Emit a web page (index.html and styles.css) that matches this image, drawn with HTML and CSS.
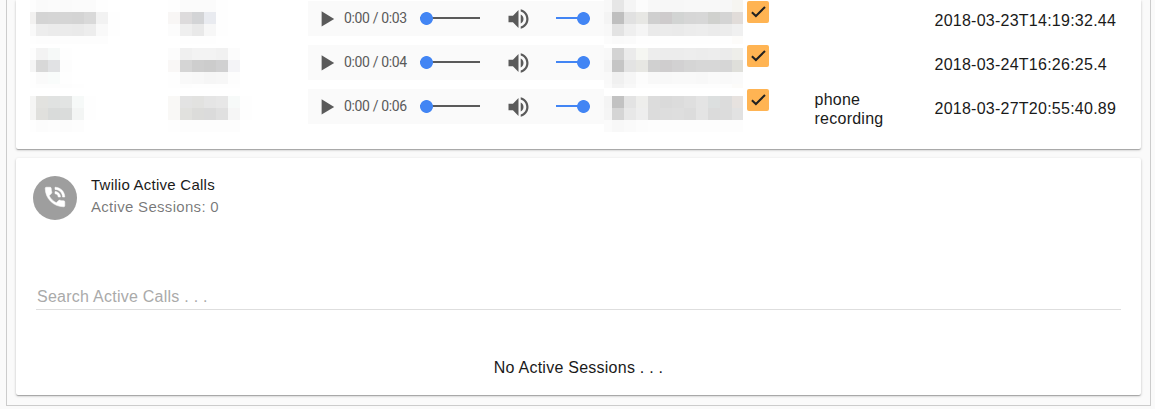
FILE: index.html
```html
<!DOCTYPE html>
<html lang="en">
<head>
<meta charset="utf-8">
<title>Twilio Calls</title>
<link rel="stylesheet" href="styles.css">
</head>
<body>
<svg class="defs" aria-hidden="true">
  <symbol id="play" viewBox="0 0 14 16"><path d="M.6.3v15.2L13.2 7.9z"/></symbol>
  <symbol id="volume" viewBox="3 3 18 18"><path d="M3 9v6h4l5 5V4L7 9H3zm13.500 3c0-1.770-1.020-3.290-2.500-4.030v8.050c1.480-.730 2.500-2.250 2.500-4.020zM14 3.230v2.060c2.890.860 5 3.540 5 6.710s-2.110 5.850-5 6.710v2.060c4.010-.910 7-4.490 7-8.770s-2.990-7.860-7-8.770z"/></symbol>
  <symbol id="check" viewBox="0 0 22 22"><path d="M4.900 11.200 8.900 15 18 6" fill="none" stroke="#212121" stroke-width="2"/></symbol>
</svg>
<main class="panel">
  <section class="card recordings">
    <div class="row">
      <svg class="masked name"></svg><svg class="masked number"></svg>
      <div class="player"><svg class="play"><use href="#play"/></svg><span class="time">0:00 / 0:03</span><i class="track"></i><svg class="volume"><use href="#volume"/></svg><i class="level"></i></div>
      <svg class="masked sid"></svg>
      <span class="box"><svg><use href="#check"/></svg></span>
      <span class="note"></span><span class="date">2018-03-23T14:19:32.44</span>
    </div>
    <div class="row">
      <svg class="masked name"></svg><svg class="masked number"></svg>
      <div class="player"><svg class="play"><use href="#play"/></svg><span class="time">0:00 / 0:04</span><i class="track"></i><svg class="volume"><use href="#volume"/></svg><i class="level"></i></div>
      <svg class="masked sid"></svg>
      <span class="box"><svg><use href="#check"/></svg></span>
      <span class="note"></span><span class="date">2018-03-24T16:26:25.4</span>
    </div>
    <div class="row">
      <svg class="masked name"></svg><svg class="masked number"></svg>
      <div class="player"><svg class="play"><use href="#play"/></svg><span class="time">0:00 / 0:06</span><i class="track"></i><svg class="volume"><use href="#volume"/></svg><i class="level"></i></div>
      <svg class="masked sid"></svg>
      <span class="box"><svg><use href="#check"/></svg></span>
      <span class="note">phone recording</span><span class="date">2018-03-27T20:55:40.89</span>
    </div>
  </section>
  <section class="card active">
    <header class="head">
      <span class="avatar"><svg viewBox="0 0 24 24"><path d="M20 15.500c-1.250 0-2.450-.200-3.570-.570-.350-.110-.740-.030-1.020.240l-2.200 2.200c-2.830-1.440-5.150-3.750-6.590-6.590l2.200-2.200c.280-.280.360-.670.250-1.020C8.700 6.450 8.500 5.250 8.500 4c0-.550-.450-1-1-1H4c-.550 0-1 .450-1 1 0 9.390 7.610 17 17 17 .550 0 1-.450 1-1v-3.500c0-.550-.450-1-1-1zM19 12h2c0-4.970-4.030-9-9-9v2c3.870 0 7 3.130 7 7zm-4 0h2c0-2.760-2.240-5-5-5v2c1.660 0 3 1.340 3 3z"/></svg></span>
      <div><h2>Twilio Active Calls</h2><p>Active Sessions: 0</p></div>
    </header>
    <input class="search" type="text" placeholder="Search Active Calls . . .">
    <p class="empty">No Active Sessions . . .</p>
  </section>
</main>
<script src="mask.js"></script>
</body>
</html>
```

FILE: styles.css
```css
* { box-sizing: border-box; }
body {
  margin: 0;
  height: 409px;
  overflow: hidden;
  background: #fafafa;
  color: #1a1a1a;
  font: 16px/19px "Liberation Sans", Arial, sans-serif;
  letter-spacing: .25px;
}
.defs { display: none; }
.panel {
  width: 1145px;
  height: 406px;
  margin-left: 6px;
  padding: 0 9px 9px;
  border: 1px solid #ccc;
  border-top: 0;
}
.card {
  background: #fff;
  border-radius: 2px;
  box-shadow: 0 1px 3px rgba(0, 0, 0, .2), 0 1px 1px rgba(0, 0, 0, .14), 0 2px 1px -1px rgba(0, 0, 0, .12);
}
.recordings { height: 149px; margin-bottom: 9px; border-radius: 0 0 2px 2px; }
.row {
  display: grid;
  grid-template-columns: 138px 140px 296px 139px 71.5px 120px 1fr;
  height: 44px;
  padding-left: 14px;
}
.masked { width: 100%; height: 44px; shape-rendering: crispEdges; }
.player {
  display: flex;
  align-items: center;
  height: 35px;
  margin-top: 1px;
  padding-left: 13px;
  background: #fafafa;
  fill: #5a5a5a;
}
.play { width: 14px; height: 16px; }
.time {
  width: 76px;
  margin: 0 0 2px 9px;
  color: #5a5a5a;
  font: 14px/16px Roboto, sans-serif;
  letter-spacing: -.35px;
  white-space: nowrap;
}
.track, .level {
  height: 13px;
  background: radial-gradient(circle at 6.5px 6.5px, #4285f4 6px, transparent 6.800px), linear-gradient(#5a5a5a, #5a5a5a) 0 5px / 100% 2px no-repeat;
}
.track { width: 60px; }
.volume { width: 21px; height: 20px; margin: 0 27px 0 28px; }
.level {
  width: 34px;
  background: radial-gradient(circle at 27.500px 6.5px, #4285f4 6px, transparent 6.800px), linear-gradient(#4285f4, #4285f4) 0 5px / 28px 2px no-repeat;
}
.box { width: 22px; height: 22px; margin: 1px 0 0 4px; border-radius: 2px; background: #ffb453; }
.box svg { display: block; width: 22px; height: 22px; }
.note { width: 90px; padding-top: 2px; }
.date { padding-top: 11px; }
.active { height: 237px; padding: 18px 20px 0; }
.head { display: flex; height: 44px; margin-left: -3px; }
.avatar {
  display: flex;
  width: 44px;
  height: 44px;
  margin-right: 14px;
  padding: 8px 0 0 9px;
  border-radius: 50%;
  background: #9e9e9e;
}
.avatar svg { width: 26px; height: 26px; fill: #fff; stroke: #fff; stroke-width: .5; }
h2, .head p { margin: 0; font-size: 15px; font-weight: 400; line-height: 22px; letter-spacing: .25px; }
h2 { margin-top: -2px; }
.head p { color: rgba(0, 0, 0, .54); letter-spacing: .3px; }
.search {
  display: block;
  width: 1085px;
  height: 30px;
  margin-top: 60px;
  padding: 4px 1px 0;
  border: 0;
  border-bottom: 1px solid #dedede;
  background: none;
  font: inherit;
  letter-spacing: inherit;
  outline: 0;
}
.search::placeholder { color: #aaa; opacity: 1; }
.empty { margin: 48px 0 0; text-align: center; }
```

FILE: mask.js
```js
// Mosaic blocks that hide private values: one array of lines per table row,
// each line holding the grey (or full hex) of every 12px block.
const masks = {
  name: { first: 6, rows: [
    ["fd fa fb fa fb fb fe", "f2f1f0 d4 d5 d5 d4 d9 f2 fe", "f9 ed eb eb ea ed f9 fe", "fe fd fd fd fd fd fd"],
    ["fd f3 f6f9f8 fe", "f5 d8 e1e2e4 fd", "fe fa f9fcfb fe", "fe fd fd fd fe"],
    ["f5f5f4 e2e2df e0e2e1 e2e4e3 f6f9f8 fe", "f5f5f4 e0e0dd d9dbda dadcdb f3f5f4 fe", "fe fc fd fc fd"]
  ]},
  number: { first: 12, rows: [
    ["fe fb fb fb fe", "f8f6f5 dddbdc d3d4d6 e9ebf0 fe", "fc ef e9 f7 fe", "ff fe fe fe"],
    ["fc f0 f3 f3 f1 fc", "f9f7f6 d5 ce cc d0d0d1 f4f4f7", "fe f9 f8 f6 f7 fd", "fe fd fe fe fe fe"],
    ["f9f8f6 e3 e2e2e0 e5 e7 f7faf9 fe", "f9f8f6 e1e1de dcdcda db e0 f6 fe", "fe fd fd fd fd fd"]
  ]},
  sid: { first: 8, rows: [
    ["f8 e6 f5 fc f8 f7 f7 f8 f8 f8 f7 f6f5f1", "f4 bf e1 e7e7e4 cf cecbcc d2d4d3 d6 d7 d0d1ce d4 e1dcd9", "f8 e3 ef f5 ea eb ea ec ed eb ec f0", "fc fa fb fe fe fe fe fe fe fe fe fdfcfa"],
    ["f8 d3 eb f5f6f2 ed ec ec ed ec ed eb eeeeea", "f4 c5 e3 e7e7e3 d0 cfcdce d2d1d2 d5 d7 d7 d6 dfdfda", "f9 f0 f6 fc f8 f8 f9 f9 f8 fa f9 fa", "fa f3 f8 fd fd fd fd fd fd fd fd fcfbf9"],
    ["f4 c2 e3 eeeeec dc da dc df e4 dcdfdf dc e7e2df", "f5 d5 e8 ee dc dd de dc e4 db dc e2", "fb f8 fa fc fd fd fd fd fd fd fd fd"]
  ]}
};
for (const [kind, mask] of Object.entries(masks)) {
  document.querySelectorAll(".masked." + kind).forEach((svg, row) => {
    svg.innerHTML = mask.rows[row].map((line, j) => line.split(" ").map((c, i) => {
      const x = i ? mask.first + (i - 1) * 12 : 0;
      const last = kind === "sid" && i === 11;
      const width = last ? 11 : i ? 12 : mask.first;
      const fill = "#" + (c.length === 2 ? c + c + c : c);
      return `<rect x="${x}" y="${j * 12 + row * 4}" width="${width}" height="12" fill="${fill}"/>`;
    }).join("")).join("");
  });
}
```
